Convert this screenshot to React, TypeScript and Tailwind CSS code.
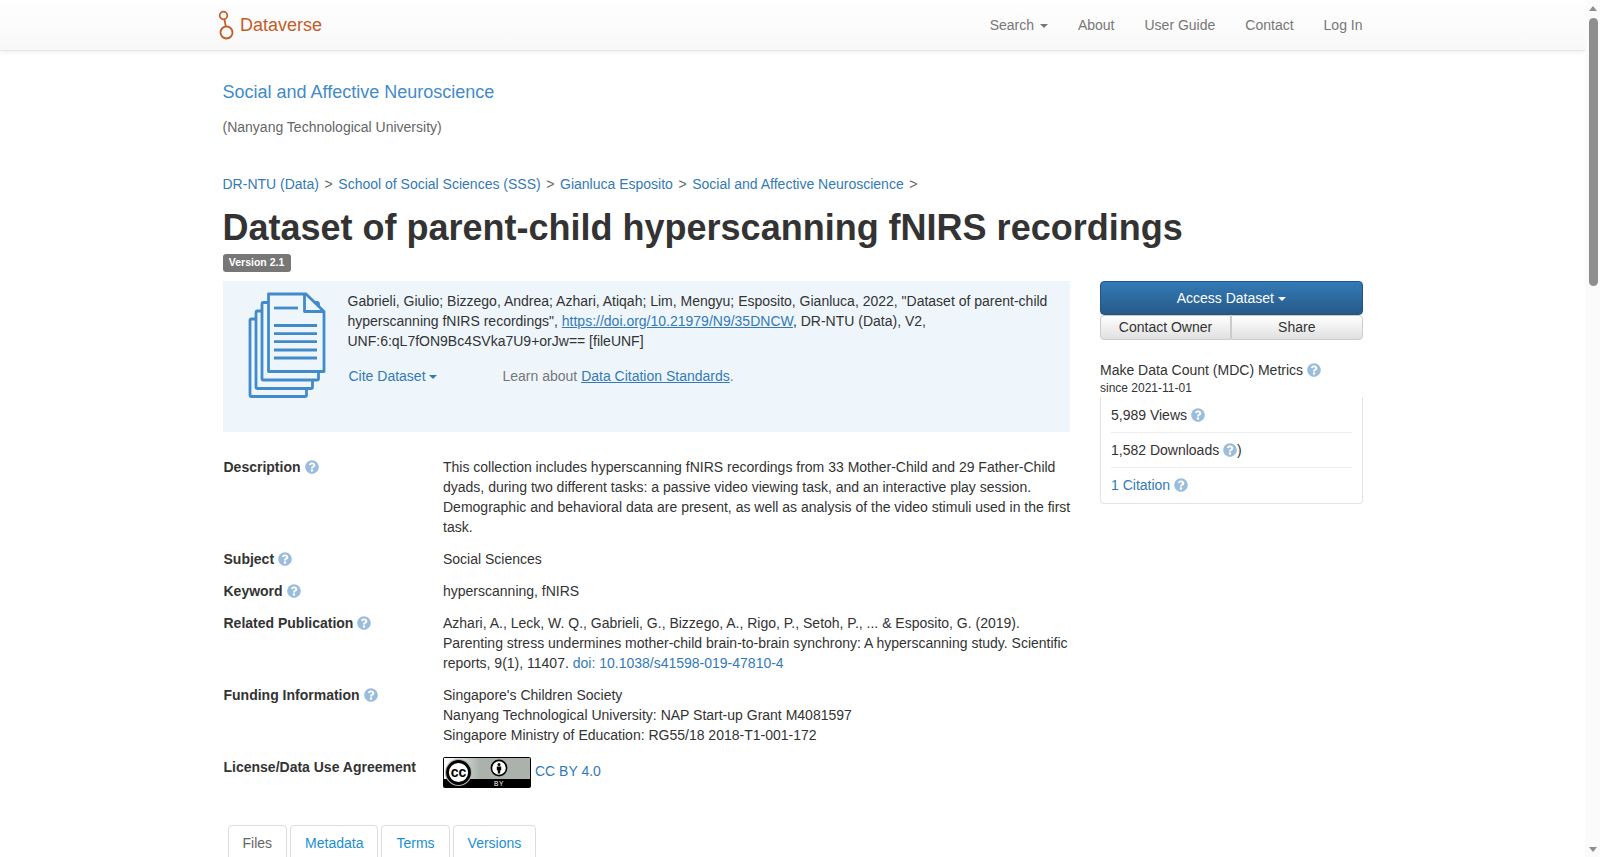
import { FaQuestionCircle } from "react-icons/fa";

function Help({ className = "" }: { className?: string }) {
  return <FaQuestionCircle size={14} className={`inline-block align-[-2px] text-[#9abcdd] ${className}`} />;
}

function Caret({ className = "" }: { className?: string }) {
  return <span className={`inline-block h-0 w-0 align-middle border-x-4 border-t-4 border-x-transparent border-t-current ${className}`} />;
}

function Logo() {
  return (
    <svg width="18" height="30" viewBox="0 0 18 30" className="mr-[5px] -ml-[5.5px] shrink-0">
      <circle cx="6.5" cy="5.5" r="3.8" fill="none" stroke="#c55b28" strokeWidth="1.7" />
      <path d="M7.4 9.2 L8.8 16.5" stroke="#c55b28" strokeWidth="1.7" fill="none" />
      <circle cx="9.5" cy="22.5" r="6" fill="none" stroke="#c55b28" strokeWidth="1.8" />
    </svg>
  );
}

function DocIcon() {
  const lines = [325.5, 333.7, 341.7, 350, 358];
  return (
    <svg width="84" height="110" viewBox="245 290 84 110" className="shrink-0">
      <g fill="#eef6fc" stroke="#428bca" strokeWidth="2.8" strokeLinejoin="round">
        <rect x="250" y="319" width="56.5" height="77.5" rx="1.5" />
        <rect x="256" y="311" width="56.5" height="77.5" rx="1.5" />
        <rect x="262" y="302.5" width="56.5" height="77.5" rx="1.5" />
        <path d="M268.5 294 H306 L324 311.5 V371.5 H268.5 Z" />
        <path d="M304.5 294 V311.5 H324" fill="none" />
      </g>
      <path d="M274 308 H298" stroke="#428bca" strokeWidth="2.8" />
      {lines.map((y) => (
        <path key={y} d={`M274 ${y} H317`} stroke="#428bca" strokeWidth="2.8" />
      ))}
    </svg>
  );
}

function CcBadge() {
  return (
    <svg width="88" height="31" viewBox="0 0 88 31" className="shrink-0">
      <defs>
        <linearGradient id="ccfade" x1="0" x2="1" y1="0" y2="0">
          <stop offset="0" stopColor="#ffffff" />
          <stop offset="1" stopColor="#aab2ab" />
        </linearGradient>
      </defs>
      <rect x="0" y="0" width="88" height="31" rx="2" fill="#000" />
      <rect x="1" y="1" width="86" height="21" fill="#aab2ab" />
      <rect x="1" y="1" width="36" height="21" fill="url(#ccfade)" />
      <circle cx="15.5" cy="15.5" r="13.5" fill="#aab2ab" />
      <circle cx="15.5" cy="15.5" r="11" fill="#fff" stroke="#000" strokeWidth="2.8" />
      <text x="15.5" y="20" textAnchor="middle" fontFamily="Liberation Sans, sans-serif" fontWeight="700" fontSize="14" fill="#000">cc</text>
      <circle cx="56" cy="11" r="7.6" fill="#fff" stroke="#000" strokeWidth="1.6" />
      <circle cx="56" cy="7.4" r="1.5" fill="#000" />
      <path d="M53.8 9.6 H58.2 V13.2 H57.2 V16.6 H54.8 V13.2 H53.8 Z" fill="#000" />
      <text x="56" y="29.4" textAnchor="middle" fontFamily="Liberation Sans, sans-serif" fontSize="6.6" letterSpacing="0.6" fill="#fff">BY</text>
    </svg>
  );
}

function MetaRow({ label, children }: { label: string; children: React.ReactNode }) {
  return (
    <div className="mb-3 -mr-[2px] flex pl-[1px]">
      <div className="w-[219.5px] shrink-0 font-bold">
        {label}
        {label !== "License/Data Use Agreement" && <Help className="ml-[4px]" />}
      </div>
      <div className="min-w-0 flex-1">{children}</div>
    </div>
  );
}

export default function App() {
  return (
    <div className="flex h-[857px] w-[1600px] overflow-hidden bg-white font-['Liberation_Sans',Arial,sans-serif] text-[14px] leading-5 text-[#333]">
      <div className="h-full w-[1585px] shrink-0">
        <nav className="h-[51px] border-b border-[#e7e7e7] bg-gradient-to-b from-white to-[#f8f8f8] shadow-[0_1px_5px_rgba(0,0,0,0.075)]">
          <div className="mx-auto flex h-[50px] w-[1140px] items-center justify-between">
            <a className="flex items-center text-[18px] text-[#c55b28]">
              <Logo />
              Dataverse
            </a>
            <div className="flex gap-[30px] text-[#777]">
              <span>
                Search <Caret className="ml-[2px]" />
              </span>
              <span>About</span>
              <span>User Guide</span>
              <span>Contact</span>
              <span>Log In</span>
            </div>
          </div>
        </nav>

        <main className="mx-auto w-[1140px]">
          <div className="mt-[31px] text-[18px] text-[#428bca]">Social and Affective Neuroscience</div>
          <div className="mt-[14.5px] text-[#666]">(Nanyang Technological University)</div>

          <div className="mt-[37px] flex gap-[5.6px]">
            <a className="text-[#337ab7]">DR-NTU (Data)</a>
            <span className="text-[#666]">&gt;</span>
            <a className="text-[#337ab7]">School of Social Sciences (SSS)</a>
            <span className="text-[#666]">&gt;</span>
            <a className="text-[#337ab7]">Gianluca Esposito</a>
            <span className="text-[#666]">&gt;</span>
            <a className="text-[#337ab7]">Social and Affective Neuroscience</a>
            <span className="text-[#666]">&gt;</span>
          </div>

          <h1 className="mt-[14.5px] text-[36px] leading-[40px] font-bold">Dataset of parent-child hyperscanning fNIRS recordings</h1>
          <div className="mt-[3px] h-[18px]">
            <span className="inline-block h-[18px] rounded-[3px] bg-[#777] px-[6.3px] text-[10.5px] leading-[17px] font-bold text-white">Version 2.1</span>
          </div>

          <div className="mt-[12px] flex items-start gap-[30px]">
            <div className="w-[847.5px] shrink-0">
              <div className="flex h-[151px] bg-[#eef6fc] pt-[9px] pl-[22px]">
                <DocIcon />
                <div className="ml-[19px] min-w-0 flex-1 pr-[15px]">
                  <p className="mt-[1px]">
                    Gabrieli, Giulio; Bizzego, Andrea; Azhari, Atiqah; Lim, Mengyu; Esposito, Gianluca, 2022, "Dataset of parent-child hyperscanning fNIRS recordings",{" "}
                    <a className="text-[#337ab7] underline">https://doi.org/10.21979/N9/35DNCW</a>, DR-NTU (Data), V2, UNF:6:qL7fON9Bc4SVka7U9+orJw== [fileUNF]
                  </p>
                  <div className="mt-[15px] flex">
                    <a className="ml-[1px] w-[154px] text-[#337ab7]">
                      Cite Dataset <Caret />
                    </a>
                    <span className="text-[#777]">
                      Learn about <a className="text-[#337ab7] underline">Data Citation Standards</a>.
                    </span>
                  </div>
                </div>
              </div>

              <div className="mt-[25px]">
                <MetaRow label="Description">
                  This collection includes hyperscanning fNIRS recordings from 33 Mother-Child and 29 Father-Child dyads, during two different tasks: a passive video viewing task, and an interactive play session. Demographic and behavioral data are present, as well as analysis of the video stimuli used in the first task.
                </MetaRow>
                <MetaRow label="Subject">Social Sciences</MetaRow>
                <MetaRow label="Keyword">hyperscanning, fNIRS</MetaRow>
                <MetaRow label="Related Publication">
                  Azhari, A., Leck, W. Q., Gabrieli, G., Bizzego, A., Rigo, P., Setoh, P., ... &amp; Esposito, G. (2019). Parenting stress undermines mother-child brain-to-brain synchrony: A hyperscanning study. Scientific reports, 9(1), 11407.{" "}
                  <a className="text-[#337ab7]">doi: 10.1038/s41598-019-47810-4</a>
                </MetaRow>
                <MetaRow label="Funding Information">
                  Singapore's Children Society
                  <br />
                  Nanyang Technological University: NAP Start-up Grant M4081597
                  <br />
                  Singapore Ministry of Education: RG55/18 2018-T1-001-172
                </MetaRow>
                <MetaRow label="License/Data Use Agreement">
                  <div className="flex items-center">
                    <CcBadge />
                    <a className="mb-[4px] ml-1 text-[#337ab7]">CC BY 4.0</a>
                  </div>
                </MetaRow>
              </div>
            </div>

            <aside className="w-[262.5px] shrink-0">
              <button className="block h-[34px] w-full rounded-[4px] border border-[#245580] bg-gradient-to-b from-[#337ab7] to-[#265a88] text-white">
                Access Dataset <Caret />
              </button>
              <div className="flex h-[25px]">
                <button className="w-[131px] rounded-l-[4px] border border-[#ccc] bg-gradient-to-b from-white to-[#e0e0e0] pb-[2px]">Contact Owner</button>
                <button className="flex-1 rounded-r-[4px] border border-[#ccc] bg-gradient-to-b from-white to-[#e0e0e0] pb-[2px]">Share</button>
              </div>
              <div className="mt-[20px]">
                Make Data Count (MDC) Metrics <Help />
              </div>
              <div className="text-[12px] leading-[17px]">since 2021-11-01</div>
              <div className="rounded-b-[4px] border-x border-b border-[#e4e4e4] pr-[10px] pl-[10px]">
                <div className="h-[36px] border-b border-[#eee] pt-[8px]">
                  5,989 Views <Help />
                </div>
                <div className="h-[35px] border-b border-[#eee] pt-[7px]">
                  1,582 Downloads <Help />)
                </div>
                <div className="h-[35px] pt-[7px]">
                  <a className="text-[#337ab7]">1 Citation</a> <Help />
                </div>
              </div>
            </aside>
          </div>

          <div className="mt-[25px] flex gap-[3px] pl-[5px]">
            <a className="rounded-t-[4px] border border-[#ddd] px-[14px] pt-[7px] pb-[8px] text-[#666]">Files</a>
            <a className="rounded-t-[4px] border border-[#ddd] px-[14px] pt-[7px] pb-[8px] text-[#1a8fd1]">Metadata</a>
            <a className="rounded-t-[4px] border border-[#ddd] px-[14px] pt-[7px] pb-[8px] text-[#1a8fd1]">Terms</a>
            <a className="rounded-t-[4px] border border-[#ddd] px-[14px] pt-[7px] pb-[8px] text-[#1a8fd1]">Versions</a>
          </div>
        </main>
      </div>

      <div className="flex h-full w-[15px] shrink-0 flex-col items-center bg-[#fbfbfb] pt-[6px] pb-[5px] pl-[1px]">
        <span className="h-0 w-0 border-x-[4.5px] border-b-[5px] border-x-transparent border-b-[#8e8e8e]" />
        <span className="mt-[7px] h-[268px] w-[9px] rounded-full bg-[#8e8e8e]" />
        <span className="mt-auto h-0 w-0 border-x-[4.5px] border-t-[5px] border-x-transparent border-t-[#8e8e8e]" />
      </div>
    </div>
  );
}
